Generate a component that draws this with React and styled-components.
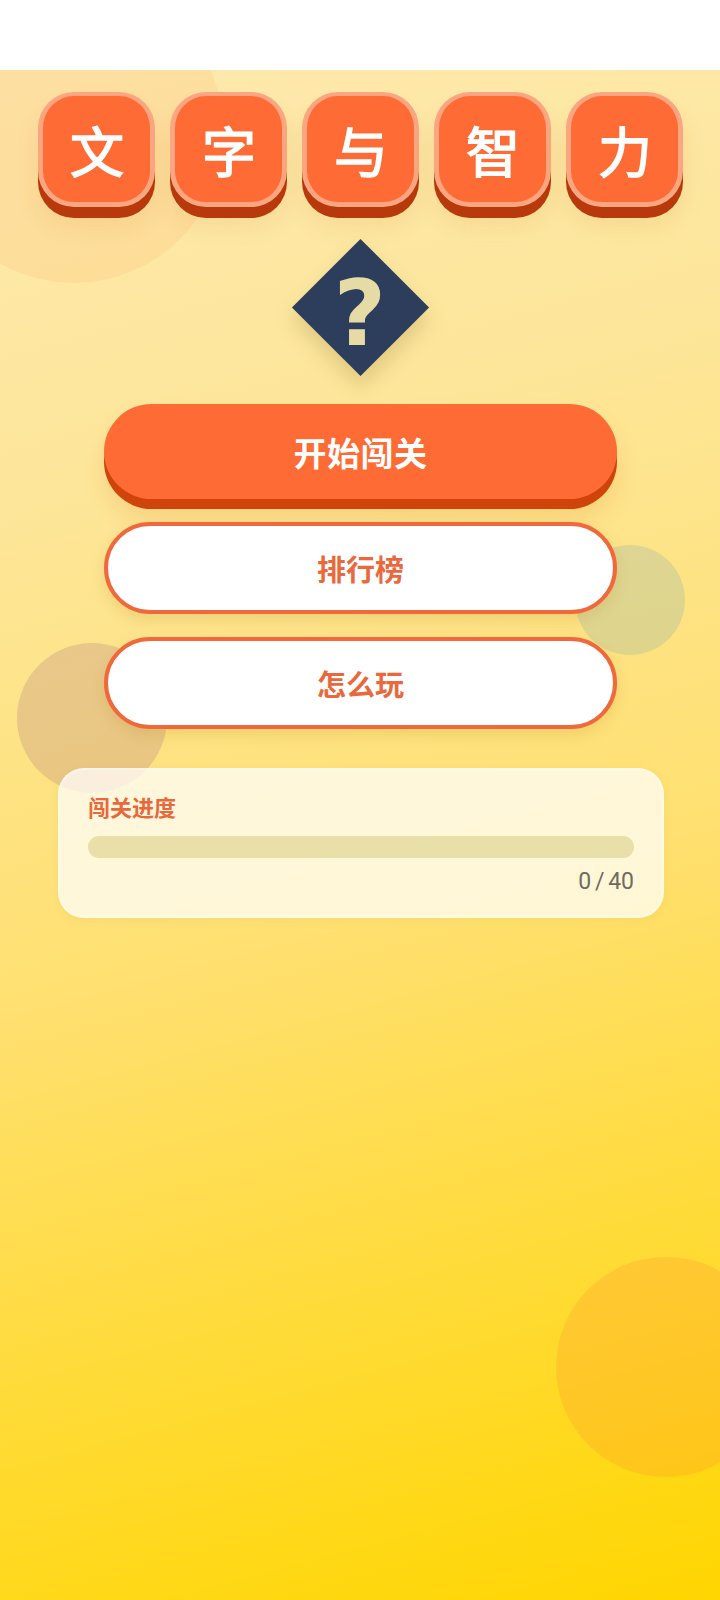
import styled, { createGlobalStyle } from 'styled-components';

const GlobalStyle = createGlobalStyle`
    html, body {
        margin: 0;
        padding: 0;
        background: #fff;
    }
    * {
        box-sizing: border-box;
    }
`;

const Page = styled.div`
    width: 720px;
    height: 1600px;
    display: flex;
    flex-direction: column;
    font-family: "Noto Sans CJK SC", "Noto Sans", sans-serif;
`;

const StatusBar = styled.div`
    height: 70px;
    flex-shrink: 0;
    background: #fff;
`;

const Screen = styled.main`
    position: relative;
    flex: 1;
    overflow: hidden;
    display: flex;
    flex-direction: column;
    align-items: center;
    padding-top: 22px;
    background: linear-gradient(165deg, #fde9ae 0%, #fde69a 25%, #ffe070 55%, #ffd600 100%);
`;

const Bubble = styled.div`
    position: absolute;
    left: ${(p) => p.$x - p.$size / 2}px;
    top: ${(p) => p.$y - p.$size / 2}px;
    width: ${(p) => p.$size}px;
    height: ${(p) => p.$size}px;
    border-radius: 50%;
    background: ${(p) => p.$color};
`;

const TitleRow = styled.div`
    position: relative;
    display: flex;
    gap: 15px;
`;

const Tile = styled.div`
    width: 117px;
    height: 115px;
    padding: 2px 0 0 2px;
    display: flex;
    align-items: center;
    justify-content: center;
    border: 5px solid #fba680;
    border-top-width: 4px;
    border-radius: 36px;
    background: #ff6b35;
    color: #fff;
    font-size: 54px;
    font-weight: 400;
    -webkit-text-stroke: 1.5px #fff;
    line-height: 1;
    box-shadow: 0 11px 0 #b8390b, 0 18px 24px rgba(200, 110, 30, 0.12);
`;

const Badge = styled.div`
    position: relative;
    width: 97px;
    height: 97px;
    margin-top: 52px;
    margin-left: 1px;
    display: flex;
    align-items: center;
    justify-content: center;
    background: #2c3e5c;
    transform: rotate(45deg);
    box-shadow: 8px 8px 20px rgba(120, 100, 30, 0.22);
`;

// the badge is turned 45deg, so the offset here runs along its diagonal
const BadgeMark = styled.span`
    transform: translate(4.5px, 4.5px) rotate(-45deg);
    color: #e6dba5;
    font-family: "DejaVu Sans", sans-serif;
    font-size: 90px;
    font-weight: 700;
    line-height: 1;
`;

const Menu = styled.nav`
    position: relative;
    margin-top: 48px;
    margin-left: 1px;
    width: 513px;
    display: flex;
    flex-direction: column;
    gap: 23px;
`;

const PrimaryButton = styled.button`
    height: 95px;
    border: none;
    border-radius: 48px;
    background: #ff6b35;
    color: #fff;
    font: 700 33px "Noto Sans CJK SC", sans-serif;
    letter-spacing: 0.5px;
    box-shadow: 0 10px 0 #cf440b, 0 18px 24px rgba(220, 120, 30, 0.2);
`;

const SecondaryButton = styled.button`
    height: 92px;
    border: 4px solid #f0683c;
    border-radius: 46px;
    background: #fff;
    color: #e9683c;
    font: 700 29px "Noto Sans CJK SC", sans-serif;
    box-shadow: 0 6px 14px rgba(170, 130, 30, 0.18);
`;

const ProgressCard = styled.section`
    position: relative;
    width: 606px;
    height: 150px;
    margin-top: 39px;
    margin-left: 2px;
    padding: 23px 28px 0;
    border: 2px solid rgba(255, 255, 255, 0.35);
    border-radius: 26px;
    background: rgba(255, 255, 255, 0.72);
    box-shadow: 0 2px 8px rgba(120, 140, 60, 0.08);
    display: flex;
    flex-direction: column;
`;

const ProgressLabel = styled.div`
    color: #e9683c;
    font-size: 22px;
    font-weight: 700;
    line-height: 26px;
`;

const ProgressTrack = styled.div`
    height: 22px;
    margin-top: 17px;
    border-radius: 11px;
    background: #e8e0a8;
    overflow: hidden;
`;

const ProgressFill = styled.div`
    height: 100%;
    background: #ff6b35;
`;

const ProgressCount = styled.div`
    margin-top: 10px;
    text-align: right;
    color: #6f6b62;
    font-family: Roboto, sans-serif;
    font-size: 23px;
    word-spacing: -2px;
    line-height: 28px;
`;

const titleChars = ['文', '字', '与', '智', '力'];
const bubbles = [
    { x: 74, y: 133, size: 300, color: 'rgba(255, 140, 60, 0.1)' },
    { x: 630, y: 600, size: 110, color: 'rgba(93, 162, 192, 0.2)' },
    { x: 92, y: 718, size: 150, color: 'rgba(150, 90, 130, 0.2)' },
    { x: 666, y: 1367, size: 220, color: 'rgba(255, 130, 50, 0.2)' },
];

const level = 0;
const total = 40;

const App = () => {
    return (
        <>
            <GlobalStyle />
            <Page>
                <StatusBar />
                <Screen>
                    {bubbles.map((b) => (
                        <Bubble key={b.x} $x={b.x} $y={b.y - 70} $size={b.size} $color={b.color} />
                    ))}
                    <TitleRow>
                        {titleChars.map((c) => (
                            <Tile key={c}>{c}</Tile>
                        ))}
                    </TitleRow>
                    <Badge>
                        <BadgeMark>?</BadgeMark>
                    </Badge>
                    <Menu>
                        <PrimaryButton>开始闯关</PrimaryButton>
                        <SecondaryButton>排行榜</SecondaryButton>
                        <SecondaryButton>怎么玩</SecondaryButton>
                    </Menu>
                    <ProgressCard>
                        <ProgressLabel>闯关进度</ProgressLabel>
                        <ProgressTrack>
                            <ProgressFill style={{ width: `${(level / total) * 100}%` }} />
                        </ProgressTrack>
                        <ProgressCount>{level} / {total}</ProgressCount>
                    </ProgressCard>
                </Screen>
            </Page>
        </>
    );
};

export default App;
